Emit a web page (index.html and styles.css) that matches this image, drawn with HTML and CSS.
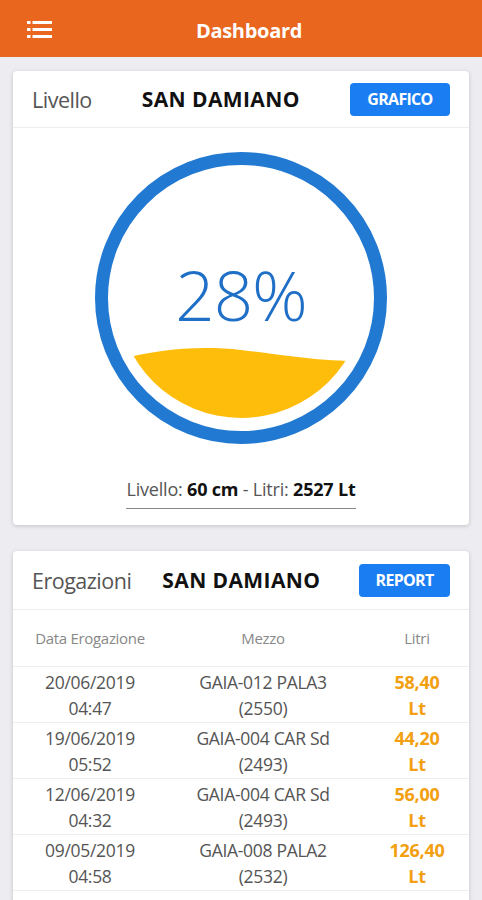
FILE: index.html
```html
<!DOCTYPE html>
<html lang="it">
<head>
<meta charset="utf-8">
<title>Dashboard</title>
<link rel="stylesheet" href="styles.css">
</head>
<body>
<header class="topbar">
  <svg class="menu-icon" width="25" height="17" viewBox="0 0 25 17">
    <rect x="0" y="0" width="3.5" height="3" fill="#fff"/>
    <rect x="5.5" y="0" width="19.5" height="3" fill="#fff"/>
    <rect x="0" y="7" width="3.5" height="3" fill="#fff"/>
    <rect x="5.5" y="7" width="19.5" height="3" fill="#fff"/>
    <rect x="0" y="14" width="3.5" height="3" fill="#fff"/>
    <rect x="5.5" y="14" width="19.5" height="3" fill="#fff"/>
  </svg>
  <h1 class="title">Dashboard</h1>
</header>

<main class="content">
  <section class="card">
    <div class="card-head">
      <span class="label">Livello</span>
      <span class="site site-1">SAN DAMIANO</span>
      <button class="btn">GRAFICO</button>
    </div>
    <div class="gauge-wrap">
      <svg class="gauge" width="300" height="300" viewBox="0 0 300 300">
        <defs>
          <clipPath id="inner">
            <circle cx="150" cy="146" r="124"/>
          </clipPath>
        </defs>
        <path clip-path="url(#inner)" fill="#fdbd0a" d="M20 214 C 60 202, 105 197, 150 202 S 230 215, 300 213 L300 300 L0 300 Z"/>
        <circle cx="150" cy="150" r="139.5" fill="none" stroke="#2279d2" stroke-width="13"/>
        <text x="150" y="173" text-anchor="middle" class="pct">28%</text>
      </svg>
    </div>
    <div class="info-wrap">
      <p class="info">Livello: <b>60 cm</b> - Litri: <b>2527 Lt</b></p>
    </div>
  </section>

  <section class="card card-2">
    <div class="card-head">
      <span class="label">Erogazioni</span>
      <span class="site site-2">SAN DAMIANO</span>
      <button class="btn btn-report">REPORT</button>
    </div>
    <div class="table">
      <div class="row row-head">
        <div class="c1">Data Erogazione</div>
        <div class="c2">Mezzo</div>
        <div class="c3">Litri</div>
      </div>
      <div class="row">
        <div class="c1">20/06/2019<br>04:47</div>
        <div class="c2">GAIA-012 PALA3<br>(2550)</div>
        <div class="c3 lt">58,40<br>Lt</div>
      </div>
      <div class="row">
        <div class="c1">19/06/2019<br>05:52</div>
        <div class="c2">GAIA-004 CAR Sd<br>(2493)</div>
        <div class="c3 lt">44,20<br>Lt</div>
      </div>
      <div class="row">
        <div class="c1">12/06/2019<br>04:32</div>
        <div class="c2">GAIA-004 CAR Sd<br>(2493)</div>
        <div class="c3 lt">56,00<br>Lt</div>
      </div>
      <div class="row">
        <div class="c1">09/05/2019<br>04:58</div>
        <div class="c2">GAIA-008 PALA2<br>(2532)</div>
        <div class="c3 lt">126,40<br>Lt</div>
      </div>
      <div class="row">
        <div class="c1">&nbsp;<br>&nbsp;</div>
        <div class="c2">&nbsp;</div>
        <div class="c3">&nbsp;</div>
      </div>
    </div>
  </section>
</main>
</body>
</html>
```

FILE: styles.css
```css
* { box-sizing: border-box; }
html, body {
  margin: 0;
  padding: 0;
  height: 900px;
  overflow: hidden;
}
body {
  background: #ececf1;
  font-family: "Open Sans", "Noto Sans", sans-serif;
  color: #333;
}
.topbar {
  height: 57px;
  background: #e8661e;
  display: flex;
  align-items: center;
  justify-content: center;
  padding-top: 3px;
  position: relative;
}
.menu-icon {
  position: absolute;
  left: 27px;
  top: 21px;
}
.title {
  margin: 0;
  color: #fff;
  font-size: 20px;
  font-weight: 700;
  letter-spacing: -0.3px;
  margin-left: 16px;
}
.content {
  padding: 14px 13px 0;
  display: flex;
  flex-direction: column;
  gap: 26px;
}
.card {
  background: #fff;
  border-radius: 4px;
  box-shadow: 0 1px 4px rgba(0,0,0,0.18);
}
.card-head {
  height: 57px;
  display: flex;
  align-items: center;
  padding: 0 19px 0 19px;
  border-bottom: 1px solid #eeeeee;
}
.label {
  font-size: 21.5px;
  color: #555;
  letter-spacing: -0.5px;
}
.site {
  font-size: 21px;
  font-weight: 700;
  color: #111;
  letter-spacing: 0.4px;
}
.site-1 { margin-left: 50px; }
.site-2 { margin-left: 31px; }
.btn {
  margin-left: auto;
  background: #1a7ef2;
  color: #fff;
  border: 0;
  border-radius: 4px;
  font-family: inherit;
  font-weight: 700;
  font-size: 16px;
  letter-spacing: -0.7px;
  height: 33px;
  padding: 0;
  width: 100px;
}
.btn-report { width: 91px; }
.card-2 .card-head { height: 59px; }
.gauge-wrap {
  display: flex;
  justify-content: center;
  padding-top: 20px;
}
.gauge { display: block; }
.pct {
  font-family: "Open Sans", sans-serif;
  font-size: 69px;
  font-weight: 300;
  fill: #1f6fc7;
  letter-spacing: -1px;
}
.info-wrap {
  display: flex;
  justify-content: center;
  padding: 29px 0 16px;
}
.info {
  margin: 0;
  font-size: 18px;
  line-height: 24px;
  color: #555;
  padding-bottom: 7px;
  border-bottom: 1px solid #888;
  letter-spacing: -0.2px;
}
.info b { color: #111; font-weight: 700; }
.table { display: flex; flex-direction: column; }
.row {
  display: grid;
  grid-template-columns: 154px 192px 1fr;
  align-items: center;
  height: 56px;
  border-bottom: 1px solid #eeeeee;
  font-size: 17.5px;
  line-height: 26px;
  color: #555;
  text-align: center;
  letter-spacing: -0.3px;
}
.row-head {
  height: 57px;
  font-size: 15px;
  color: #888;
}
.c3 { padding-left: 6px; }
.lt {
  color: #f29f12;
  font-weight: 700;
  font-size: 18px;
}
```
